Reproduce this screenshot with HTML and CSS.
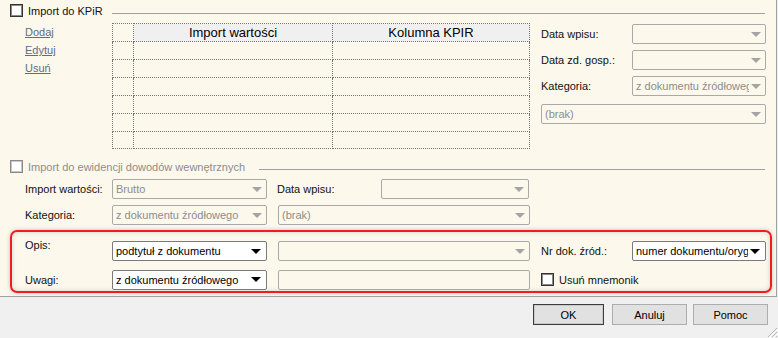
FILE: index.html
```html
<!DOCTYPE html>
<html lang="pl">
<head>
    <meta charset="UTF-8">
    <title>Import dokumentów</title>
    <link rel="stylesheet" href="styles.css">
</head>
<body>

<div class="dialog">
    <div class="panel">
        <div class="group-head">
            <div class="head-label"><span class="check"></span><span>Import do KPiR</span></div>
            <div class="rule"></div>
        </div>

        <div class="kpir">
            <div class="links">
                <a href="#">Dodaj</a>
                <a href="#">Edytuj</a>
                <a href="#">Usuń</a>
            </div>

            <table class="grid">
                <tr>
                    <th class="corner"></th>
                    <th>Import wartości</th>
                    <th>Kolumna KPIR</th>
                </tr>
                <tr><td></td><td></td><td></td></tr>
                <tr><td></td><td></td><td></td></tr>
                <tr><td></td><td></td><td></td></tr>
                <tr><td></td><td></td><td></td></tr>
                <tr><td></td><td></td><td></td></tr>
                <tr class="last"><td></td><td></td><td></td></tr>
            </table>

            <div class="side">
                <span class="label">Data wpisu:</span>
                <div class="combo"><span class="val"></span></div>
                <span class="label">Data zd. gosp.:</span>
                <div class="combo"><span class="val"></span></div>
                <span class="label">Kategoria:</span>
                <div class="combo"><span class="val">z dokumentu źródłowego</span></div>
                <div class="combo span-2"><span class="val">(brak)</span></div>
            </div>
        </div>

        <div class="group-head second">
            <div class="head-label disabled"><span class="check"></span><span>Import do ewidencji dowodów wewnętrznych</span></div>
            <div class="rule"></div>
        </div>

        <div class="form-rows">
            <span class="label">Import wartości:</span>
            <div class="combo short"><span class="val">Brutto</span></div>
            <div class="pair">
                <span class="label">Data wpisu:</span>
                <div class="combo date"><span class="val"></span></div>
            </div>

            <span class="label">Kategoria:</span>
            <div class="combo short"><span class="val">z dokumentu źródłowego</span></div>
            <div class="combo mid"><span class="val">(brak)</span></div>
        </div>

        <div class="highlight">
            <span class="label top">Opis:</span>
            <div class="combo short on"><span class="val">podtytuł z dokumentu</span></div>
            <div class="combo mid"><span class="val"></span></div>
            <span class="label">Nr dok. źród.:</span>
            <div class="combo on"><span class="val">numer dokumentu/oryginału</span></div>

            <span class="label">Uwagi:</span>
            <div class="combo short on"><span class="val">z dokumentu źródłowego</span></div>
            <div class="field mid"></div>
            <div class="check-row"><span class="check"></span><span>Usuń mnemonik</span></div>
        </div>
    </div>

    <div class="buttons">
        <button class="btn default">OK</button>
        <button class="btn cancel">Anuluj</button>
        <button class="btn">Pomoc</button>
    </div>

    <svg class="grip" width="11" height="11" viewBox="0 0 11 11">
        <path d="M10 1 L1 10 M10 5 L5 10 M10 9 L9 10" stroke="#b4b4b4" stroke-width="1"/>
        <path d="M11 2 L2 11 M11 6 L6 11" stroke="#ffffff" stroke-width="1"/>
    </svg>
</div>

</body>
</html>
```

FILE: styles.css
```css
* {
    box-sizing: border-box;
}
body {
    margin: 0;
    background-color: #f0f0f0;
    font-family: "Liberation Sans", Arial, sans-serif;
    font-size: 11px;
    color: #111;
}
.dialog {
    position: relative;
    width: 778px;
    height: 338px;
}
.panel {
    width: 777px;
    height: 297px;
    background: #fcf8ec;
    border-right: 1px solid #a0a0a0;
    border-bottom: 1px solid #a0a0a0;
    padding-top: 4px;
}

/* group headers */
.group-head {
    display: grid;
    grid-template-columns: 112px 1fr;
    height: 13px;
    margin-right: 11px;
}
.head-label {
    display: flex;
    align-items: center;
    gap: 5px;
    padding-left: 10px;
    white-space: nowrap;
}
.check {
    display: inline-block;
    width: 13px;
    height: 13px;
    border: 1px solid #333;
    background: #fff;
    box-shadow: inset 0 0 0 1px #8a8a8a;
}
.rule {
    height: 1px;
    margin-top: 9px;
    background: #a0a0a0;
}
.group-head.second {
    grid-template-columns: auto 1fr;
    margin-top: 11px;
}
.group-head.second .rule {
    margin-left: 14px;
}
.disabled {
    color: #8d8d8d;
}
.disabled .check {
    border-color: #8a8a8a;
    box-shadow: inset 0 0 0 1px #c8c8c8;
}

/* KPiR section */
.kpir {
    display: grid;
    grid-template-columns: 112px 429px 225px;
    margin-top: 6px;
}
.links {
    display: flex;
    flex-direction: column;
    align-items: flex-start;
    padding-left: 25px;
    line-height: 18px;
}
.links a {
    color: #5e6c88;
}
.grid {
    width: 418px;
    border-collapse: collapse;
    table-layout: fixed;
}
.grid th, .grid td {
    height: 18px;
    padding: 0;
    border: 1px dotted #777;
}
.grid th {
    background: #f0f0f0;
    font-weight: normal;
    font-size: 13px;
    color: #000;
}
.grid th.corner {
    width: 21px;
    background: #fcf8ec;
}
.grid th:nth-child(2) {
    width: 199px;
}
.grid .last td {
    height: 17px;
}
.side {
    display: grid;
    grid-template-columns: 91px 134px;
    row-gap: 6px;
    align-items: center;
    align-content: start;
    margin-top: 1px;
}
.side .span-2 {
    grid-column: 1 / 3;
    margin-top: 2px;
}

/* combo boxes */
.combo, .field {
    display: flex;
    align-items: center;
    height: 20px;
    border: 1px solid #a9a9a9;
    border-radius: 2px;
    background: #fcf8ec;
    color: #8d8d8d;
}
.combo .val {
    flex: 1;
    padding-left: 3px;
    overflow: hidden;
    white-space: nowrap;
}
.combo::after {
    content: "";
    border-top: 5px solid #a4a4a4;
    border-left: 5px solid transparent;
    border-right: 5px solid transparent;
    margin: 0 4px 0 2px;
}
.combo.on {
    background: #fff;
    border-color: #7a7a7a;
    color: #000;
}
.combo.on::after {
    border-top-color: #000;
    margin-right: 5px;
}
.short {
    width: 155px;
}
.mid {
    width: 252px;
}
.date {
    width: 148px;
}

/* lower sections */
.form-rows, .highlight {
    display: grid;
    grid-template-columns: 87px 166px 263px 91px 134px;
    row-gap: 6px;
    align-items: center;
}
.form-rows {
    margin-top: 6px;
    padding-left: 25px;
}
.pair {
    grid-column: 3 / 6;
    display: flex;
    align-items: center;
}
.pair .label {
    width: 104px;
    margin-left: -1px;
}
.highlight {
    width: 762px;
    height: 63px;
    margin: 5px 0 0 10px;
    padding: 8px 4px 0 13px;
    border: 2px solid #ee1c25;
    border-radius: 7px;
    box-shadow: 0 0 4px rgba(0, 0, 0, 0.22), inset 0 0 5px rgba(0, 0, 0, 0.16);
}
.label.top {
    align-self: start;
    margin-top: -1px;
}
.check-row {
    grid-column: 4 / 6;
    display: flex;
    align-items: center;
    gap: 5px;
}

/* buttons */
.buttons {
    display: flex;
    justify-content: flex-end;
    gap: 6px;
    padding: 7px 10px 0 0;
}
.btn {
    width: 75px;
    height: 21px;
    border: 1px solid #adadad;
    background: #e1e1e1;
    font-family: "Liberation Sans", Arial, sans-serif;
    font-size: 11px;
    color: #000;
}
.btn.default {
    width: 71px;
    border-color: #3c3c3c;
    box-shadow: inset 0 0 0 1px #c9c9c9;
}
.btn.cancel {
    margin-left: 2px;
}
.grip {
    position: absolute;
    right: 0;
    bottom: 0;
}
```
